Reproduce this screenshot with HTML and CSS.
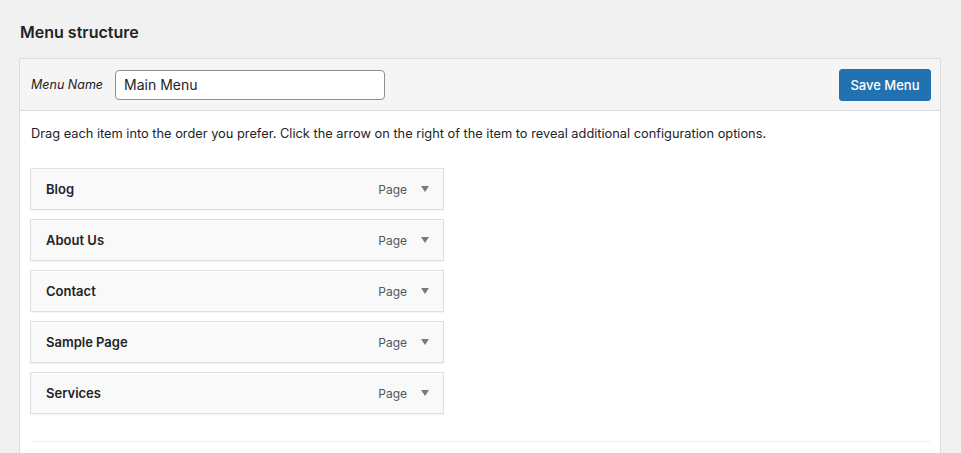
FILE: index.html
```html
<!DOCTYPE html>
<html>
<head>
<meta charset="utf-8">
<link rel="stylesheet" href="styles.css">
</head>
<body>
<div class="page">
  <h2 class="title">Menu structure</h2>
  <div class="panel">
    <div class="panel-header">
      <label class="name-label">Menu Name</label>
      <input class="name-input" type="text" value="Main Menu">
      <button class="save-btn">Save Menu</button>
    </div>
    <div class="panel-body">
      <p class="desc">Drag each item into the order you prefer. Click the arrow on the right of the item to reveal additional configuration options.</p>
      <ul class="items">
        <li class="item"><span class="item-title">Blog</span><span class="item-type">Page</span><span class="arrow"></span></li>
        <li class="item"><span class="item-title">About Us</span><span class="item-type">Page</span><span class="arrow"></span></li>
        <li class="item"><span class="item-title">Contact</span><span class="item-type">Page</span><span class="arrow"></span></li>
        <li class="item"><span class="item-title">Sample Page</span><span class="item-type">Page</span><span class="arrow"></span></li>
        <li class="item"><span class="item-title">Services</span><span class="item-type">Page</span><span class="arrow"></span></li>
      </ul>
      <div class="divider"></div>
    </div>
  </div>
</div>
</body>
</html>
```

FILE: styles.css
```css
* { box-sizing: border-box; }
html, body { margin: 0; padding: 0; background: #f1f1f1; overflow: hidden; }
body {
  font-family: Inter, "Noto Sans", sans-serif;
  color: #1d2327;
  font-size: 13px;
  height: 453px;
}
.page { padding: 20px 20px 0 19px; }
.title {
  margin: 0 0 0 1px;
  font-size: 16px;
  font-weight: 600;
  line-height: 24px;
  color: #1d2327;
}
.panel {
  margin-top: 14px;
  width: 922px;
  border: 1px solid #dcdcde;
  border-bottom: none;
  background: #fff;
  height: 400px;
}
.panel-header {
  display: flex;
  align-items: center;
  height: 52px;
  padding: 0 9px 0 11px;
  background: #f5f5f5;
  border-bottom: 1px solid #dcdcde;
}
.name-label {
  font-style: italic;
  font-size: 12.5px;
  color: #1d2327;
  margin-right: 12px;
}
.name-input {
  width: 270px;
  height: 30px;
  border: 1px solid #8c8f94;
  border-radius: 4px;
  padding: 0 8px;
  font-family: inherit;
  font-size: 14px;
  color: #1d2327;
  background: #fff;
}
.save-btn {
  margin-left: auto;
  width: 92px;
  height: 32px;
  background: #2271b1;
  border: 1px solid #2271b1;
  border-radius: 3px;
  color: #fff;
  font-family: inherit;
  font-size: 13px;
  font-weight: 500;
  padding: 0;
}
.panel-body { padding: 13px 10px 0 10px; }
.desc {
  margin: 0 0 24px 1px;
  line-height: 20px;
  font-size: 12.8px;
  color: #1d2327;
}
.items { list-style: none; margin: 0; padding: 0; }
.item {
  display: flex;
  align-items: center;
  width: 414px;
  height: 42px;
  margin-bottom: 9px;
  padding: 0 14px 0 15px;
  background: #f9f9f9;
  border: 1px solid #dfdfdf;
  box-shadow: inset 0 1px 0 #fff, 0 1px 1px rgba(0,0,0,.04);
}
.item-title { font-weight: 600; font-size: 13px; color: #1d2327; }
.item-type { margin-left: auto; font-size: 12px; color: #50575e; }
.arrow {
  margin-left: 14px;
  width: 0; height: 0;
  border-left: 4px solid transparent;
  border-right: 4px solid transparent;
  border-top: 6px solid #787c82;
}
.divider {
  margin: 27px 0 0 1px;
  border-top: 1px solid #eeeeee;
  width: 899px;
}
```
